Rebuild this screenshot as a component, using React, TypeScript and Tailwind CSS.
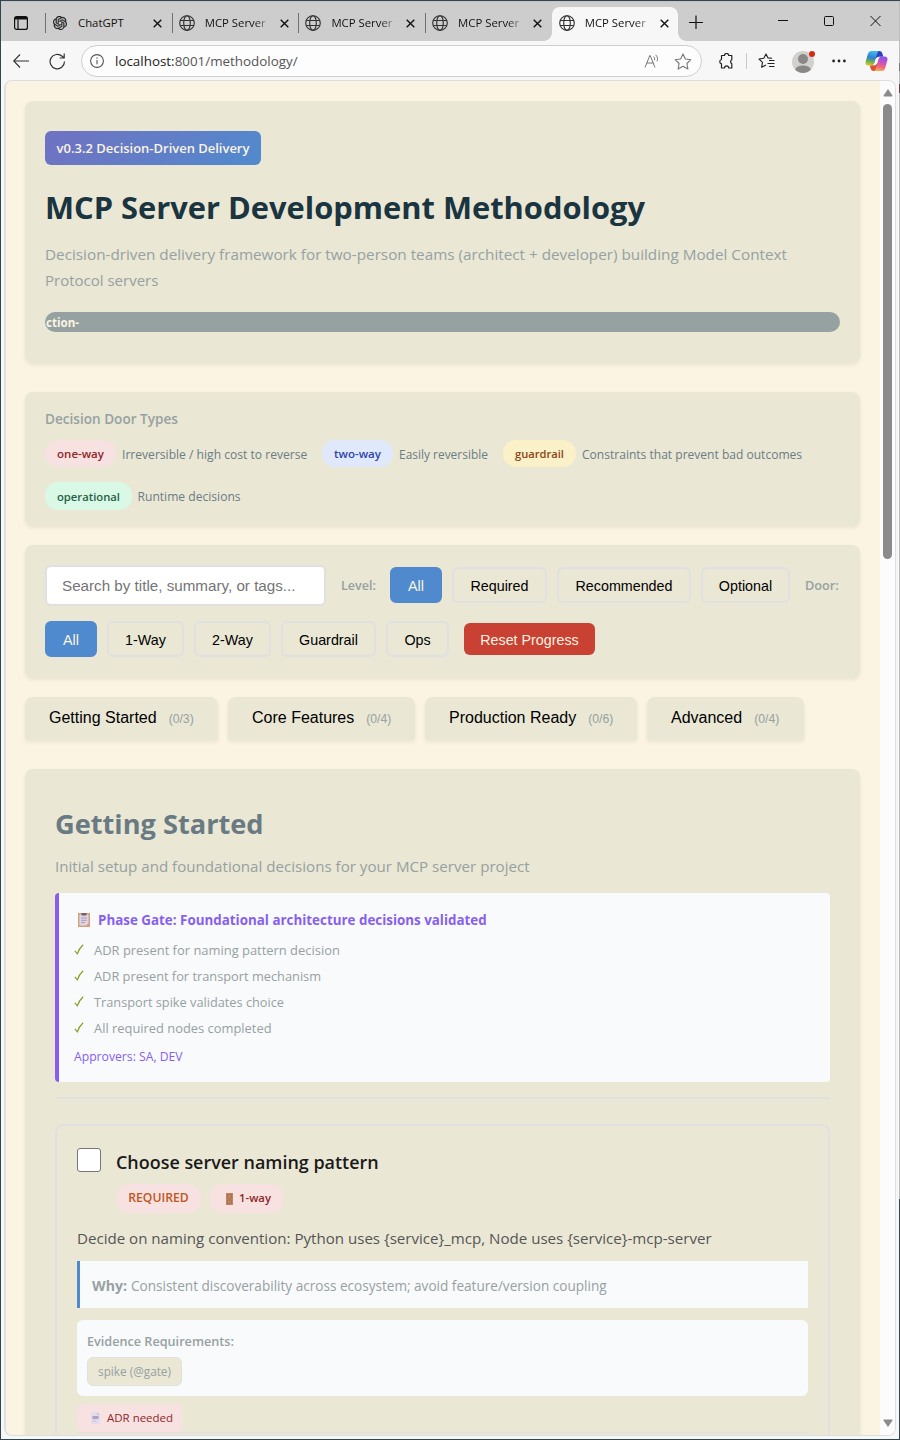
import type { ReactNode } from "react";

const card = "rounded-lg bg-[#eae7d5] shadow-[0_2px_4px_rgba(0,0,0,0.07)]";

function Globe() {
  return (
    <svg width="16" height="16" viewBox="0 0 16 16" fill="none" stroke="#333" strokeWidth="1.15">
      <circle cx="8" cy="8" r="7.3" />
      <ellipse cx="8" cy="8" rx="3.3" ry="7.3" />
      <path d="M1.2 5.5h13.6M1.2 10.5h13.6" />
    </svg>
  );
}

function OpenAiMark() {
  return (
    <svg width="14" height="14" viewBox="0 0 24 24" fill="#222" stroke="#222" strokeWidth=".5">
      <path d="M22.2819 9.8211a5.9847 5.9847 0 0 0-.5157-4.9108 6.0462 6.0462 0 0 0-6.5098-2.9A6.0651 6.0651 0 0 0 4.9807 4.1818a5.9847 5.9847 0 0 0-3.9977 2.9 6.0462 6.0462 0 0 0 .7427 7.0966 5.98 5.98 0 0 0 .511 4.9107 6.051 6.051 0 0 0 6.5146 2.9001A5.9847 5.9847 0 0 0 13.2599 24a6.0557 6.0557 0 0 0 5.7718-4.2058 5.9894 5.9894 0 0 0 3.9977-2.9001 6.0557 6.0557 0 0 0-.7475-7.0729zm-9.022 12.6081a4.4755 4.4755 0 0 1-2.8764-1.0408l.1419-.0804 4.7783-2.7582a.7948.7948 0 0 0 .3927-.6813v-6.7369l2.02 1.1686a.071.071 0 0 1 .038.052v5.5826a4.504 4.504 0 0 1-4.4945 4.4944zm-9.6607-4.1254a4.4708 4.4708 0 0 1-.5346-3.0137l.142.0852 4.783 2.7582a.7712.7712 0 0 0 .7806 0l5.8428-3.3685v2.3324a.0804.0804 0 0 1-.0332.0615L9.74 19.9502a4.4992 4.4992 0 0 1-6.1408-1.6464zM2.3408 7.8956a4.485 4.485 0 0 1 2.3655-1.9728V11.6a.7664.7664 0 0 0 .3879.6765l5.8144 3.3543-2.0201 1.1685a.0757.0757 0 0 1-.071 0l-4.8303-2.7865A4.504 4.504 0 0 1 2.3408 7.872zm16.5963 3.8558L13.1038 8.364 15.1192 7.2a.0757.0757 0 0 1 .071 0l4.8303 2.7913a4.4944 4.4944 0 0 1-.6765 8.1042v-5.6772a.79.79 0 0 0-.407-.667zm2.0107-3.0231l-.142-.0852-4.7735-2.7818a.7759.7759 0 0 0-.7854 0L9.409 9.2297V6.8974a.0662.0662 0 0 1 .0284-.0615l4.8303-2.7866a4.4992 4.4992 0 0 1 6.6802 4.66zM8.3065 12.863l-2.02-1.1638a.0804.0804 0 0 1-.038-.0567V6.0742a4.4992 4.4992 0 0 1 7.3757-3.4537l-.142.0805L8.704 5.459a.7948.7948 0 0 0-.3927.6813zm1.0976-2.3654l2.602-1.4998 2.6069 1.4998v2.9994l-2.5974 1.4997-2.6067-1.4997Z" />
    </svg>
  );
}

function Cross() {
  return (
    <svg width="9" height="9" viewBox="0 0 9 9" fill="none" stroke="#111" strokeWidth="1.4">
      <path d="M.7.7l7.6 7.6M8.3.7L.7 8.3" />
    </svg>
  );
}

function BrowserTab({ title, active, divided }: { title: string; active?: boolean; divided?: boolean }) {
  const chat = title === "ChatGPT";
  return (
    <div className={`relative flex h-[34px] w-[126.700px] shrink-0 items-center pb-0.5 ${active ? "rounded-t-lg bg-[#f7f7f7]" : ""}`}>
      <span className={`h-5 w-px ${divided ? "bg-[#707070]" : "bg-transparent"}`} />
      <span className={`flex w-[26px] ${chat ? "pl-[7px]" : "pl-1.5"}`}>{chat ? <OpenAiMark /> : <Globe />}</span>
      <span className={`w-[74px] pl-1.5 text-[11.35px] ${chat ? "text-[#111]" : "bg-linear-to-r from-[#111] from-75% to-[#bbb] to-95% bg-clip-text text-transparent"}`}>{title}</span>
      <span className="flex pl-[7px]"><Cross /></span>
      {active && (
        <>
          <span className="absolute bottom-0 -left-2 size-2 bg-[radial-gradient(circle_at_0_0,#cdcdcd_7.5px,#f7f7f7_8px)]" />
          <span className="absolute -right-2 bottom-0 size-2 bg-[radial-gradient(circle_at_100%_0,#cdcdcd_7.5px,#f7f7f7_8px)]" />
        </>
      )}
    </div>
  );
}

function TitleBar() {
  return (
    <div className="flex h-10 items-end border-t border-[#c3c3c3] bg-[#cdcdcd]">
      <div className="flex h-[34px] w-11 items-center pb-0.5 pl-[13px]">
        <svg width="14" height="14" viewBox="0 0 14 14" fill="none" stroke="#111" strokeWidth="1.2">
          <rect x=".6" y=".6" width="12.8" height="12.8" rx="2" />
          <path d="M1 2.2h12" strokeWidth="2.6" />
          <path d="M4 3.500v10" />
        </svg>
      </div>
      <BrowserTab title="ChatGPT" divided />
      <BrowserTab title="MCP Server" divided />
      <BrowserTab title="MCP Server" divided />
      <BrowserTab title="MCP Server" divided />
      <BrowserTab title="MCP Server" active />
      <svg className="mb-3" width="220" height="14" viewBox="0 0 220 14" fill="none" stroke="#111" strokeWidth="1">
        <path d="M11 7.5h14M18 .5v14" strokeWidth="1.2" />
        <path d="M100 5.5h10" />
        <rect x="146.500" y="1.500" width="9" height="9" rx="1" />
        <path d="M192.500 1l10 10M202.500 1l-10 10" />
      </svg>
    </div>
  );
}

function Toolbar() {
  return (
    <div className="flex h-10 items-center bg-[#f7f7f7] pl-3">
      <svg width="16" height="16" viewBox="0 0 16 16" fill="none" stroke="#333" strokeWidth="1.1">
        <path d="M16 8H.8M7 1.5L.7 8 7 14.500" />
      </svg>
      <svg className="ml-5" width="17" height="17" viewBox="0 0 17 17" fill="none" stroke="#333" strokeWidth="1.2">
        <path d="M15.500 8.500a7.200 7.200 0 1 1-2.300-5.200L15 5M15.200.5V5h-4.600" />
      </svg>
      <div className="ml-[15px] flex h-8 w-[621px] items-center rounded-full border border-[#cfcfcf] bg-[#fdfdfd] pl-2">
        <svg width="14" height="14" viewBox="0 0 14 14" fill="none" stroke="#555" strokeWidth="1.1">
          <circle cx="7" cy="7" r="6.400" />
          <path d="M7 6v4.300M7 3.500v1.200" />
        </svg>
        <span className="w-[540px] shrink-0 pl-[11px] text-[13.4px] text-[#555]"><span className="text-[#222]">localhost:</span>8001/methodology/</span>
        <svg className="mb-px" width="17" height="16" viewBox="0 0 17 16" fill="none" stroke="#777" strokeWidth="1">
          <path d="M1 14.500L5.800 2.500h.4L11 14.500M2.800 10h6.500M9.500 3.500c1 .8 1.400 2 1 3.500M11.500 1.800c2 1.500 2.600 4 1.500 6.500" />
        </svg>
        <svg className="ml-[13px]" width="18" height="17" viewBox="0 0 18 17" fill="none" stroke="#777" strokeWidth="1.1" strokeLinejoin="round">
          <path d="M9 1l2.400 5 5.500.7-4 3.800 1 5.500L9 13.300 4.100 16l1-5.500-4-3.800L6.600 6z" />
        </svg>
      </div>
      <svg className="ml-4" width="17" height="17" viewBox="0 0 17 17" fill="none" stroke="#222" strokeWidth="1.2" strokeLinejoin="round">
        <path d="M3.500 2.500h3a2.100 2.100 0 0 1 4.200 0h3.100v4.200a2.300 2.300 0 0 0 0 4v4.300h-3.100a2.100 2.100 0 0 0-4.200 0h-3v-4.200a2.200 2.200 0 0 1 0-4.300z" />
      </svg>
      <span className="ml-[11px] h-4 w-px bg-[#c9c9c9]" />
      <svg className="ml-[11px]" width="17" height="16" viewBox="0 0 17 16" fill="none" stroke="#222" strokeWidth="1.1" strokeLinejoin="round">
        <path d="M14 5.300l-4-.4L8 .9 5.800 5.200 1 6l3.500 3.300-.9 5L8 12M11 7.500h5.500M9.500 10.500h7M11 13.500h5.500" />
      </svg>
      <svg className="ml-[17px]" width="24" height="24" viewBox="0 0 24 24">
        <circle cx="11" cy="13" r="11" fill="#d2d0ce" />
        <circle cx="11" cy="10" r="5" fill="#8a8886" />
        <path d="M3 20.500a8.500 6 0 0 1 16 0A11 11 0 0 1 3 20.500z" fill="#8a8886" />
        <circle cx="20" cy="5" r="3" fill="#d42a12" />
      </svg>
      <svg className="ml-4" width="14" height="4" viewBox="0 0 14 4" fill="#222">
        <circle cx="1.600" cy="2" r="1.400" /><circle cx="7" cy="2" r="1.400" /><circle cx="12.400" cy="2" r="1.400" />
      </svg>
      <svg className="ml-[19px]" width="23" height="22" viewBox="0 0 23 22">
        <defs>
          <linearGradient id="cl" x1=".2" y1="0" x2="0" y2="1"><stop stopColor="#41b2ee" /><stop offset=".4" stopColor="#2f80d4" /><stop offset=".65" stopColor="#68ad55" /><stop offset="1" stopColor="#f0ce22" /></linearGradient>
          <linearGradient id="cr" x1=".6" y1="0" x2=".4" y2="1"><stop stopColor="#8d52e8" /><stop offset=".4" stopColor="#c552c4" /><stop offset=".7" stopColor="#ee667c" /><stop offset="1" stopColor="#f3ac55" /></linearGradient>
        </defs>
        <path d="M10 1h4.500q2 0 2.700 2l1.100 3.700h-4.500q-2 0-2.500 1.500L9.500 9z" fill="#2a43be" />
        <path d="M13 21H8.500q-2 0-2.700-2l-1.100-3.700h4.500q2 0 2.500-1.500l2-1z" fill="#dd5136" />
        <path d="M6 1h8q-1.300.5-1.800 2.500L9.600 12.500q-.9 3-3.600 3H3.500Q-.3 15.500.7 11.500L3 3.500Q3.800 1 6 1z" fill="url(#cl)" />
        <path d="M17 21H9q1.300-.5 1.800-2.500l2.600-9q.9-3 3.600-3h2.500q3.800 0 2.800 4L20 18.500Q19.200 21 17 21z" fill="url(#cr)" />
        <path d="M13 8.500l-2.500 6.500-2.300.3q1.100-.6 1.600-2.300l1.200-4q.5-1.200 2-1.400z" fill="#fbfbfb" />
      </svg>
    </div>
  );
}

function Pill({ children, className }: { children: ReactNode; className: string }) {
  return <span className={`flex items-center justify-center rounded-[13px] font-semibold ${className}`}>{children}</span>;
}

function FilterButton({ label, width, active }: { label: string; width: string; active?: boolean }) {
  return (
    <button className={`h-9 shrink-0 rounded-md border-2 pt-0.5 font-['Liberation_Sans',sans-serif] text-[14.3px] leading-5 ${width} ${active ? "border-[#4f8ace] bg-[#4f8ace] text-[#fbf4e2]" : "border-[#e0e0e0] text-black"}`}>
      {label}
    </button>
  );
}

function PhaseTab({ label, count, width }: { label: string; count: string; width: string }) {
  return (
    <button className={`flex h-[43px] items-start rounded-t-lg rounded-b-[2px] bg-[#eae7d5] pt-[9px] pl-6 font-['Liberation_Sans',sans-serif] shadow-[0_2px_4px_rgba(0,0,0,0.07)] ${width}`}>
      <span className="text-base leading-6">{label}</span>
      <span className="pl-3 text-[12.2px] leading-[27px] text-[#96a1a1]">{count}</span>
    </button>
  );
}

const checks = [
  { text: "ADR present for naming pattern decision", size: "text-[12.93px]" },
  { text: "ADR present for transport mechanism", size: "text-[12.8px]" },
  { text: "Transport spike validates choice", size: "text-[12.75px]" },
  { text: "All required nodes completed", size: "text-[12.9px]" },
];

function DecisionCard() {
  return (
    <div className="mt-[25px] h-[420px] rounded-lg border-2 border-[#e0e0e0] px-5 pt-[22px]">
      <div className="flex">
        <span className="size-6 rounded-[3px] border border-[#767676] bg-white" />
        <div className="pl-[15px]">
          <h3 className="pt-px text-[17.96px] leading-[27px] font-semibold text-[#1a1a1a]">Choose server naming pattern</h3>
          <div className="mt-2 flex gap-2">
            <Pill className="h-[29px] w-[85px] bg-[#f7e1e1] text-[12.2px] text-[#c05621]">REQUIRED</Pill>
            <Pill className="h-[29px] w-[75px] gap-1.5 bg-[#f7e1e1] text-[11.3px] text-[#8f2828]">
              <svg className="ml-1" width="7" height="12" viewBox="0 0 7 12">
                <path fill="#bd8460" d="M0 0h7v12H0z" />
                <path fill="none" stroke="#a06b4c" strokeWidth=".7" d="M1.500 1.500h4v3.500h-4zM1.500 7h4v3.500h-4z" />
              </svg>
              1-way
            </Pill>
          </div>
        </div>
      </div>
      <p className="mt-3 text-[15.1px] leading-[26px] text-[#555]">Decide on naming convention: Python uses {"{service}"}_mcp, Node uses {"{service}"}-mcp-server</p>
      <div className="mt-[10px] flex h-[47px] items-baseline gap-1 border-l-[3px] border-[#4f8ace] bg-[#f9fafc] pt-[11px] pl-3 text-[13.59px] leading-[27px] text-[#96a1a1]">
        <b className="text-[14.1px]">Why:</b>
        <span>Consistent discoverability across ecosystem; avoid feature/version coupling</span>
      </div>
      <div className="mt-3 h-[76px] rounded-md bg-[#f9fafc] px-2.5 pt-2.5 text-[#96a1a1]">
        <p className="text-[12.65px] leading-[23px] font-semibold">Evidence Requirements:</p>
        <span className="mt-1 flex h-[29px] w-[95px] items-center justify-center rounded-md border border-[#e0e0e0] bg-[#eae7d5] text-[11.79px]">spike (@gate)</span>
      </div>
      <span className="mt-2 flex h-[28px] w-[106px] items-center gap-[7px] rounded-md bg-[#f7e1e1] pl-3.5 text-[11.47px] text-[#8f2828]">
        <svg width="9" height="12" viewBox="0 0 9 12">
          <path fill="#e3dcee" d="M0 0h6l3 3v9H0z" />
          <path fill="#cbbfd9" d="M6 0v3h3z" />
          <path fill="#aba3b8" d="M1.500 4h6v3h-6z" />
          <path stroke="#c5bdd0" d="M1.500 9h4" />
        </svg>
        ADR needed
      </span>
      <div className="h-px bg-[#e0e0e0]" />
    </div>
  );
}

function Page() {
  return (
    <main className="h-full w-[875px] overflow-hidden bg-[#fbf4e2] px-5 pt-5 whitespace-nowrap">
      <header className={`${card} h-[262px] px-5 pt-[30px]`}>
        <span className="flex h-[34px] w-[216px] items-center justify-center rounded-md bg-linear-135 from-[#6f71c1] to-[#4f8ace] pt-px text-[12.97px] font-semibold text-[#fbf4e2]">v0.3.2 Decision-Driven Delivery</span>
        <h1 className="mt-[17px] text-[30.83px] leading-[51px] font-bold text-[#1a3540]">MCP Server Development Methodology</h1>
        <p className="mt-2 text-[15.28px] leading-[26px] text-[#96a1a1]">
          Decision-driven delivery framework for two-person teams (architect + developer) building Model Context
          <br />
          <span className="text-[15px]">Protocol servers</span>
        </p>
        <div className="mt-[19px] h-5 w-[795px] overflow-hidden rounded-full bg-[#96a1a1] pl-px text-[11.57px] leading-[21px] font-bold text-[#fbf4e2]">ction-</div>
      </header>

      <section className={`${card} mt-[29px] h-[133.500px] px-5 pt-4`}>
        <h4 className="text-[13.59px] leading-[22px] font-semibold text-[#96a1a1]">Decision Door Types</h4>
        <div className="mt-2.5 flex flex-wrap items-center gap-y-[15px] text-[12.1px] leading-[25px] text-[#6b7d84]">
          <Pill className="h-[27px] w-[71px] bg-[#f7e1e1] text-[11.53px] text-[#8f2828]">one-way</Pill>
          <span className="w-[206px] pt-0.5 pl-1.5">Irreversible / high cost to reverse</span>
          <Pill className="h-[27px] w-[71px] bg-[#dfe9fb] text-[11.53px] text-[#2e43ab]">two-way</Pill>
          <span className="w-[110px] pt-0.5 pl-1.5 text-[11.95px]">Easily reversible</span>
          <Pill className="h-[27px] w-[73px] bg-[#faf1c9] text-[11.15px] text-[#8a4518]">guardrail</Pill>
          <span className="w-[240px] pt-0.5 pl-1.5 text-[12.05px]">Constraints that prevent bad outcomes</span>
          <Pill className="h-[28px] w-[87px] bg-[#d9f8e5] text-[11.25px] text-[#256149]">operational</Pill>
          <span className="pl-[5.500px]">Runtime decisions</span>
        </div>
      </section>

      <section className={`${card} mt-[19.500px] h-[132.500px] px-5 pt-5`}>
        <div className="flex h-[41px] items-center">
          <div className="flex h-[41px] w-[281px] items-center rounded-md border-2 border-[#e0e0e0] bg-white pt-0.5 pl-[15px] font-['Liberation_Sans',sans-serif] text-[15.19px] text-[#757575]">Search by title, summary, or tags...</div>
          <span className="w-16 pt-px pl-[15px] text-[12.57px] font-semibold text-[#96a1a1]">Level:</span>
          <div className="mb-px flex gap-2.5">
            <FilterButton label="All" width="w-[52px]" active />
            <FilterButton label="Required" width="w-[95px]" />
            <FilterButton label="Recommended" width="w-[134px]" />
            <FilterButton label="Optional" width="w-[89px]" />
          </div>
          <span className="pt-px pl-[15px] text-[12.7px] font-semibold text-[#96a1a1]">Door:</span>
        </div>
        <div className="mt-[15px] flex items-center gap-2.5">
          <FilterButton label="All" width="w-[52px]" active />
          <FilterButton label="1-Way" width="w-[77px]" />
          <FilterButton label="2-Way" width="w-[77px]" />
          <FilterButton label="Guardrail" width="w-[95px]" />
          <FilterButton label="Ops" width="w-[63px]" />
          <button className="ml-[5px] h-8 w-[131px] rounded-md bg-[#c84132] pt-0.5 font-['Liberation_Sans',sans-serif] text-[14.3px] leading-5 text-[#fbf4e2]">Reset Progress</button>
        </div>
      </section>

      <nav className="mt-[19.500px] flex gap-2.5">
        <PhaseTab label="Getting Started" count="(0/3)" width="w-[193px]" />
        <PhaseTab label="Core Features" count="(0/4)" width="w-[187px]" />
        <PhaseTab label="Production Ready" count="(0/6)" width="w-[212px]" />
        <PhaseTab label="Advanced" count="(0/4)" width="w-[157px]" />
      </nav>

      <section className={`${card} mt-[29px] h-[800px] px-[30px] pt-[30px]`}>
        <h2 className="text-[27.2px] leading-[50px] font-bold text-[#697a83]">Getting Started</h2>
        <p className="mt-1 text-[15.14px] leading-[26px] text-[#96a1a1]">Initial setup and foundational decisions for your MCP server project</p>
        <div className="mt-[14px] h-[189px] rounded border-l-4 border-[#875ff0] bg-[#f9fafc] pt-[15px] pl-[15px]">
          <div className="flex items-center pl-1 text-[13.38px] leading-6 font-bold text-[#875ff0]">
            <svg className="mr-2 mb-px" width="12" height="14" viewBox="0 0 12 14">
              <path fill="#d7a07c" d="M0 0h12v14H0z" />
              <path fill="#ded5e8" d="M1.500 1.500h9V10l-2.500 2.500H1.500z" />
              <path fill="#75616d" d="M3.500 0h5v2.500h-5z" />
              <path stroke="#aa9cb7" d="M3 5h6M3 7.300h6M3 9.600h4" />
            </svg>
            Phase Gate: Foundational architecture decisions validated
          </div>
          <ul className="mt-1.5">
            {checks.map(({ text, size }) => (
              <li key={text} className={`flex h-[26px] items-center text-[#96a1a1] ${size}`}>
                <svg className="mr-[10px] mb-[3px]" width="10" height="11" viewBox="0 0 10 12" fill="none" stroke="#869b18" strokeWidth="1.200">
                  <path d="M.5 7.500l2.700 3.200Q5 5 9.500.8" />
                </svg>
                {text}
              </li>
            ))}
          </ul>
          <p className="mt-[3px] text-[12.2px] leading-6 text-[#875ff0]">Approvers: SA, DEV</p>
        </div>
        <div className="mt-[15px] h-0.5 bg-[#e0e0e0]" />
        <DecisionCard />
      </section>
    </main>
  );
}

function Scrollbar() {
  return (
    <div className="flex w-[15px] flex-col items-center bg-[#fcfcfc] pt-2">
      <svg width="10" height="8" viewBox="0 0 10 8" fill="#8b8b8b"><path d="M5 0l4.500 6.500q.3 1-.8 1H1.300q-1.100 0-.8-1z" /></svg>
      <div className="mt-[7px] h-[455px] w-[9px] rounded-full bg-[#8b8b8b]" />
      <svg className="mt-[860px]" width="10" height="8" viewBox="0 0 10 8" fill="#8b8b8b"><path d="M5 8L.5 1.500q-.3-1 .8-1h7.400q1.100 0 .8 1z" /></svg>
    </div>
  );
}

export default function App() {
  return (
    <div className="flex h-[1440px] w-[900px] overflow-hidden border-t border-b border-l border-[#30474f] bg-[#f7f7f7] font-['Open_Sans','Noto_Sans',sans-serif]">
      <div className="w-[898px]">
        <TitleBar />
        <Toolbar />
        <div className="-mt-px ml-[3px] flex h-[1356px] w-[892px] overflow-hidden rounded-lg border border-l-2 border-[#dedee2]">
          <div className="-ml-px h-full shrink-0"><Page /></div>
          <Scrollbar />
        </div>
      </div>
      <div className="flex w-px shrink-0 flex-col bg-[#bcbcbc]">
        <span className="mt-[62px] h-2 bg-[#777]" />
        <span className="mt-[13px] h-[9px] bg-[#6c4148]" />
        <span className="mt-[1106px] h-60 bg-[#30474f]" />
      </div>
    </div>
  );
}
